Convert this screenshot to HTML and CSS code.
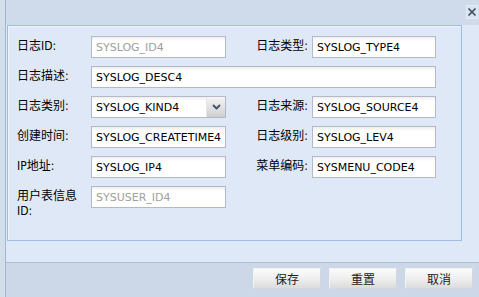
FILE: index.html
```html
<!DOCTYPE html>
<html>
<head>
<meta charset="utf-8">
<link rel="stylesheet" href="styles.css">
</head>
<body>
<div class="win">
  <div class="hdr">
    <span class="close"><svg width="10" height="10" viewBox="0 0 10 10"><path d="M1.5 1.5 L8.5 8.5 M8.5 1.5 L1.5 8.5" stroke="#3d4b5e" stroke-width="1.6" fill="none"/></svg></span>
  </div>
  <div class="wbody">
    <div class="panel">
      <div class="form">
        <label class="lbl">日志ID:</label>
        <input class="fld ro" readonly value="SYSLOG_ID4">
        <label class="lbl rt">日志类型:</label>
        <input class="fld" value="SYSLOG_TYPE4">

        <label class="lbl">日志描述:</label>
        <input class="fld wide" value="SYSLOG_DESC4">

        <label class="lbl">日志类别:</label>
        <div class="combo">
          <input class="cinput" value="SYSLOG_KIND4">
          <span class="trig"><svg width="9" height="6" viewBox="0 0 9 6"><path d="M1 1 L4.5 4.5 L8 1" stroke="#3f5066" stroke-width="1.8" fill="none"/></svg></span>
        </div>
        <label class="lbl rt">日志来源:</label>
        <input class="fld" value="SYSLOG_SOURCE4">

        <label class="lbl">创建时间:</label>
        <input class="fld" value="SYSLOG_CREATETIME4">
        <label class="lbl rt">日志级别:</label>
        <input class="fld" value="SYSLOG_LEV4">

        <label class="lbl">IP地址:</label>
        <input class="fld" value="SYSLOG_IP4">
        <label class="lbl rt">菜单编码:</label>
        <input class="fld" value="SYSMENU_CODE4">

        <label class="lbl">用户表信息ID:</label>
        <input class="fld ro" readonly value="SYSUSER_ID4">
      </div>
    </div>
  </div>
  <div class="ftr">
    <button class="btn">保存</button>
    <button class="btn">重置</button>
    <button class="btn">取消</button>
  </div>
</div>
</body>
</html>
```
FILE: styles.css
```css
html, body {
  margin: 0;
  padding: 0;
}
body {
  width: 479px;
  height: 297px;
  overflow: hidden;
  background: #d3deeb;
  font-family: "DejaVu Sans Condensed", "Noto Sans CJK SC", sans-serif;
  font-size: 12px;
  color: #000;
}
.win {
  margin-left: 5px;
  height: 297px;
  border-left: 1px solid #a2b7d1;
  display: flex;
  flex-direction: column;
}
.hdr {
  height: 25px;
  flex: none;
  background: #cfdbea;
  display: flex;
  justify-content: flex-end;
  align-items: flex-start;
  padding-right: 1px;
  box-sizing: border-box;
}
.close {
  margin-top: 5px;
  width: 12px;
  height: 14px;
  box-sizing: border-box;
  border: 1px solid #e6edf6;
  background: #d9e3ef;
  display: flex;
  align-items: center;
  justify-content: center;
}
.wbody {
  height: 237px;
  flex: none;
  background: #dfe8f6;
  padding-left: 1px;
}
.panel {
  width: 455px;
  height: 216px;
  box-sizing: border-box;
  border: 1px solid #9fbce2;
  box-shadow: inset 1px 1px 0 #eef3fa;
  background: #dfe8f6;
}
.form {
  display: grid;
  grid-template-columns: 74px 135px 86px 124px;
  grid-auto-rows: 22px;
  row-gap: 8px;
  padding: 10px 0 0 9px;
}
.lbl {
  padding-top: 3px;
  line-height: 15px;
  font-family: "DejaVu Sans Condensed", "Noto Sans CJK SC", sans-serif;
  font-size: 12px;
  color: #000;
  white-space: normal;
  padding-right: 4px;
}
.rt {
  text-align: right;
}
.fld, .combo {
  height: 22px;
  box-sizing: border-box;
  border: 1px solid #b5b8c8;
  background: linear-gradient(#eeeeee, #ffffff 4px);
  padding: 0 3px 0 4px;
  font-family: "DejaVu Sans", sans-serif;
  font-size: 11px;
  color: #000;
  outline: none;
  margin: 0;
  width: 100%;
}
.wide {
  grid-column: 2 / 5;
}
.ro {
  color: #a0a0a0;
}
.combo {
  display: flex;
  padding: 0;
}
.cinput {
  flex: 1;
  min-width: 0;
  border: 0;
  background: transparent;
  padding: 0 4px;
  font: inherit;
  color: #000;
  outline: none;
  margin: 0;
}
.trig {
  width: 18px;
  flex: none;
  background: linear-gradient(#f4f4f4, #e2e2e2 50%, #cfcfcf);
  border-left: 1px solid #e6e6e6;
  display: flex;
  align-items: center;
  justify-content: center;
}
.ftr {
  flex: 1;
  background: #ccd8e7;
  border-top: 1px solid #a9bfd9;
  display: flex;
  justify-content: flex-end;
  align-items: flex-start;
  gap: 8px;
  padding: 5px 6px 0 0;
}
.btn {
  width: 68px;
  height: 21px;
  box-sizing: border-box;
  margin: 0;
  padding: 0;
  border: 1px solid #d4d8dd;
  border-top-color: #eef0f3;
  border-left-color: #f0f2f4;
  background: linear-gradient(#fbfbfb, #efefef 50%, #dcdcdc);
  font-family: "Noto Sans CJK SC", sans-serif;
  font-size: 12px;
  color: #222;
  line-height: 19px;
}
```
